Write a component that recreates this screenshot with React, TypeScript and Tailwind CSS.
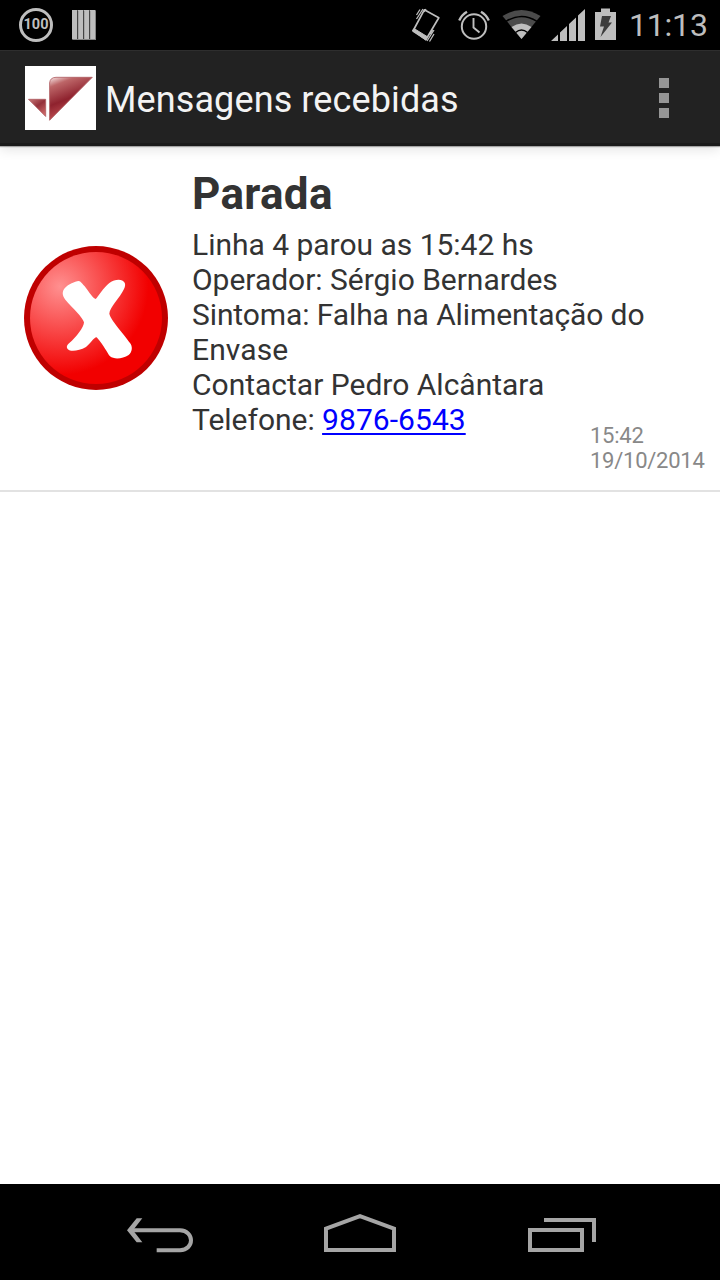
function StatusBar() {
  return (
    <header className="flex h-[50px] items-center justify-between bg-black pl-[19px] pr-[12px] text-[#bebebe]">
      <div className="flex items-center gap-[19px]">
        <div className="flex h-[34px] w-[34px] items-center justify-center rounded-full border-3 border-[#bebebe] pt-px text-[14.5px] leading-none font-bold">
          100
        </div>
        <svg className="h-[30px] w-[24px]" viewBox="0 0 24 30">
          <path d="M0 0h5l1 1v29H1l-1-1zM6 0h5l1 1v29H7l-1-1zM12 0h5l1 1v29h-5l-1-1zM18 0h5l1 1v29h-5l-1-1z" fill="#bebebe" />
          <path d="M5.6 1v28.5M11.6 1v28.5M17.6 1v28.5" stroke="#444" strokeWidth="1.2" />
          <path d="M23.5 1v28.5M1 29.5h23" stroke="#858585" />
        </svg>
      </div>
      <div className="flex items-center">
        {/* Vibrate */}
        <svg className="mr-[17px] h-[50px] w-[30px]" viewBox="411 0 30 50" fill="none" stroke="#bebebe">
          <path d="M424.3 9.8 438.8 17.8 426 39.5 413 31Z" strokeWidth="1.7" strokeLinejoin="round" />
          <path d="M412.5 30.5 414 28.5 427 36.5 426 40.2Z" fill="#bebebe" />
          <path d="M423 9 416.5 19M420 9.5 416.5 15M426 9 424 12M434 30 427 41M434 34 429.5 41.5M432.5 30 430 34" strokeWidth="1.3" />
        </svg>
        {/* Alarm */}
        <svg className="mr-[11px] h-[50px] w-[32px]" viewBox="458 0 32 50" fill="none" stroke="#bebebe">
          <circle cx="474" cy="26.5" r="12.2" strokeWidth="2" />
          <path d="M473.5 18v9.5l6 5" strokeWidth="1.9" />
          <path d="M459.2 20.5q2.4-5.5 7.8-8.7M488.8 20.5q-2.4-5.5-7.8-8.7" strokeWidth="2.3" />
        </svg>
        {/* Wi-Fi */}
        <svg className="mr-[10px] h-[50px] w-[40px]" viewBox="501 0 40 50">
          <path d="M502.5 16Q521.5 4 540.5 16L521.5 39Z" fill="#4b4b4b" />
          <path d="M511.5 27Q521.5 20 531.5 27L521.5 39Z" fill="#bebebe" />
          <path d="M506 21.4Q521.5 11.5 537 21.4M515.5 32.5Q521.5 27.5 527.5 32.5" fill="none" stroke="black" strokeWidth="1.5" />
        </svg>
        {/* Signal */}
        <svg className="mr-[10px] h-[50px] w-[34px]" viewBox="551 0 34 50" fill="#bebebe">
          <path d="M551 41 558 34.4V41ZM560 32.5 567 25.9V41H560ZM569 24 576 17.4V41H569ZM578 15.5 585 9V41H578Z" />
        </svg>
        {/* Battery */}
        <svg className="mr-[13px] h-[50px] w-[21px]" viewBox="595 0 21 50">
          <path d="M595 12h6V8.5h9V12h6v28h-21Z" fill="#bebebe" />
          <path d="M602 16h9l-2.5 6.5H612L600.5 37l3.5-10.5h-4Z" fill="#3c3c3c" />
        </svg>
        <span className="w-[79px] text-[32px] leading-[50px] tracking-[-0.2px] whitespace-nowrap">11:13</span>
      </div>
    </header>
  );
}

function ActionBar() {
  return (
    <div className="relative z-10 flex h-24 items-center border-t border-b-[3px] border-t-[#2e2e2e] border-b-[#1a1a1a] bg-[#222] pr-[51px] pl-[25px] shadow-[0_1px_1px_rgba(0,0,0,0.3),0_3px_12px_rgba(0,0,0,0.12)]">
      <svg className="mt-[2px] h-16 w-[71px] bg-white" viewBox="25 66 71 64">
        <defs>
          <linearGradient id="flag" gradientUnits="userSpaceOnUse" x1="50" y1="78" x2="66" y2="118">
            <stop offset="0" stopColor="#f4dede" />
            <stop offset="0.2" stopColor="#bd6668" />
            <stop offset="0.6" stopColor="#8f222e" />
            <stop offset="1" stopColor="#c65558" />
          </linearGradient>
          <linearGradient id="tail" x1="0" y1="0" x2="0.7" y2="1">
            <stop offset="0" stopColor="#c87878" />
            <stop offset="0.5" stopColor="#94303a" />
            <stop offset="1" stopColor="#c66" />
          </linearGradient>
        </defs>
        <path d="M49.6 120.3V83Q50 77.5 56 77.3H92.3Z" fill="url(#flag)" stroke="#ad5a60" strokeWidth="0.8" />
        <path d="M28.5 99.3H45.7V116.5Z" fill="url(#tail)" stroke="#ad5a60" strokeWidth="0.8" />
      </svg>
      <h1 className="mt-[6px] ml-[9px] text-[36px] leading-[48px] tracking-[0.11px] whitespace-nowrap text-[#f3f3f3]">Mensagens recebidas</h1>
      <div className="mt-[2px] ml-auto flex flex-col gap-[5px]">
        <span className="h-[10px] w-[10px] bg-[#969696]" />
        <span className="h-[10px] w-[10px] bg-[#969696]" />
        <span className="h-[10px] w-[10px] bg-[#969696]" />
      </div>
    </div>
  );
}

function ErrorIcon() {
  return (
    <svg className="h-36 w-36 shrink-0" viewBox="42 33 432 432">
      <defs>
        <radialGradient id="ball" gradientUnits="userSpaceOnUse" cx="150" cy="155" r="265">
          <stop offset="0" stopColor="#ff9090" />
          <stop offset="1" stopColor="#f20000" />
        </radialGradient>
      </defs>
      <circle cx="258" cy="249" r="216" fill="#bf0000" />
      <circle cx="258" cy="249" r="198" fill="url(#ball)" />
      <path
        d="M206 138C212 138 218 148 224 154C238 172 250 192 257 192C264 186 280 158 298 144C312 134 328 132 338 137C346 142 348 150 342 162C330 188 298 218 298 236C302 256 340 294 360 324C368 334 368 350 356 360C338 372 312 374 300 364C290 352 284 334 260 307C250 308 242 326 228 336C210 346 190 350 178 346C168 340 168 332 178 324C198 308 222 276 222 262C218 246 190 222 166 194C156 182 156 170 164 160C176 146 194 140 206 138Z"
        fill="white"
      />
    </svg>
  );
}

function Message() {
  return (
    <article className="flex h-[346px] items-center border-b-2 border-[#e2e2e2] pr-4 pl-6">
      <ErrorIcon />
      <div className="ml-6 flex h-full flex-1 flex-col pt-[22px] text-[#333]">
        <h2 className="text-[44px] leading-[52px] font-bold tracking-[0.3px]">Parada</h2>
        <div className="mt-[7px] text-[30px] leading-[35px] tracking-[-0.02px] whitespace-nowrap">
          <p>Linha 4 parou as 15:42 hs</p>
          <p>Operador: Sérgio Bernardes</p>
          <p className="tracking-[-0.1px]">Sintoma: Falha na Alimentação do</p>
          <p className="tracking-[0.1px]">Envase</p>
          <p className="tracking-normal">Contactar Pedro Alcântara</p>
          <p>
            Telefone:{" "}
            <a href="tel:98766543" className="tracking-[0.05px] text-[#0000ff] underline decoration-[1.5px] underline-offset-[3px]">
              9876-6543
            </a>
          </p>
        </div>
        <div className="-mt-[14px] w-[114px] self-end text-[22px] leading-[25px] tracking-[-0.25px] whitespace-nowrap text-[#888]">
          <p>15:42</p>
          <p>19/10/2014</p>
        </div>
      </div>
    </article>
  );
}

function NavBar() {
  return (
    <nav className="flex h-24 bg-black pt-[30px] pl-[127px]">
      <svg className="mt-[3px] h-[36px] w-[67px]" viewBox="81 110 201 108" fill="none" stroke="#a5a5a5" strokeWidth="12">
        <path d="M98 150H240C284 152 284 208 240 210H170" />
        <path d="M110 114H127L99 150 127 186H110L81 150Z" fill="#a5a5a5" stroke="none" />
      </svg>
      <svg className="ml-[130px] h-[38px] w-[72px]" viewBox="672 102 216 114" fill="none" stroke="#a5a5a5" strokeWidth="12">
        <path d="M678 146 780 108.5 882 146V210H678Z" />
      </svg>
      <svg className="mt-[4px] ml-[132px] h-[34px] w-[68px]" viewBox="84 114 204 102" fill="none" stroke="#a5a5a5" strokeWidth="12">
        <path d="M90 150H246V210H90ZM132 120H282V186" />
      </svg>
    </nav>
  );
}

export default function App() {
  return (
    <div className="flex h-[1280px] w-[720px] flex-col overflow-hidden bg-white font-['Roboto',sans-serif]">
      <StatusBar />
      <ActionBar />
      <main className="flex-1">
        <Message />
      </main>
      <NavBar />
    </div>
  );
}
